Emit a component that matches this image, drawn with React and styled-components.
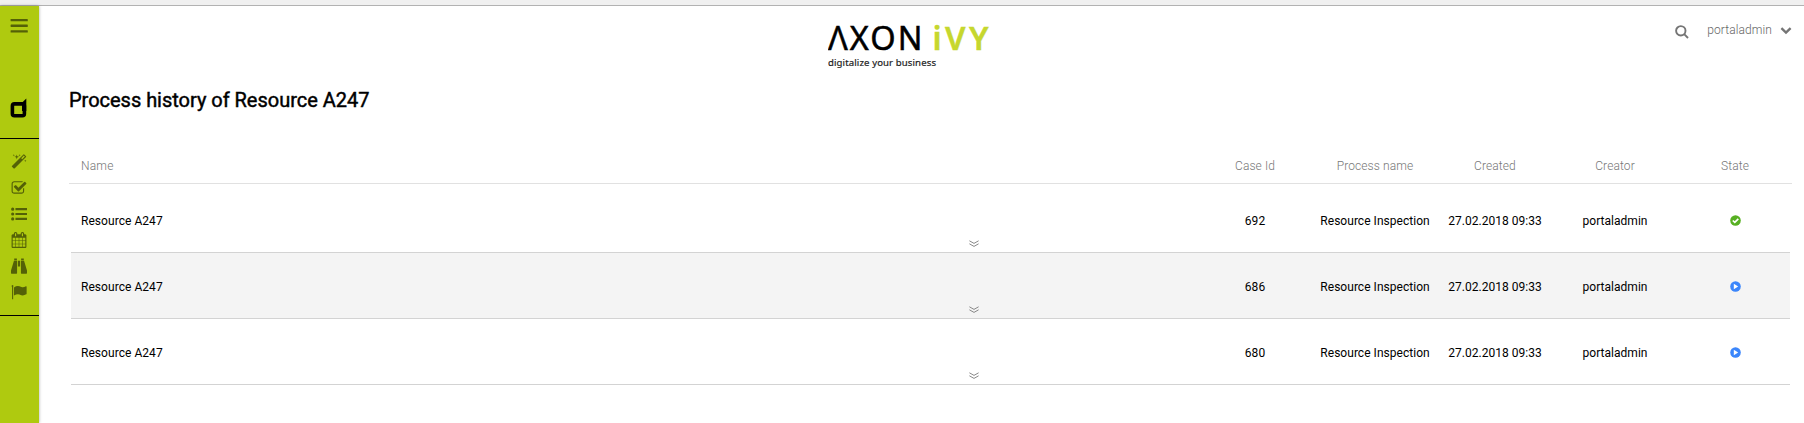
import React from "react";
import styled, { createGlobalStyle } from "styled-components";

const GlobalStyle = createGlobalStyle`
  *, *::before, *::after { box-sizing: border-box; }
  html, body { margin: 0; padding: 0; background: #fff; }
  body { font-family: Roboto, "Liberation Sans", sans-serif; font-size: 12px; color: #000; }
  svg { display: block; }
`;

const Page = styled.div`
  display: flex;
  flex-direction: column;
  width: 100%;
  height: 423px;
  overflow: hidden;
`;

const BrowserEdge = styled.div`
  flex: none;
  height: 6px;
  background: #f0f0f0;
  border-bottom: 1px solid #b2b2b2;
`;

const Body = styled.div`
  display: flex;
  flex: 1;
`;

const Sidebar = styled.nav`
  flex: none;
  width: 39px;
  background: #afca0f;
  box-shadow: 0 0 3px rgba(0, 0, 0, 0.35);
  color: rgba(0, 0, 0, 0.52);
`;

const SidebarTop = styled.div`
  height: 133px;
  padding: 12px 0 0 10px;
  border-bottom: 1px solid #000;
  display: flex;
  flex-direction: column;
  gap: 64px;
`;

const Menu = styled.div`
  height: 177px;
  padding: 10px 0 0 11px;
  border-bottom: 1px solid #000;
`;

const MenuItem = styled.div`
  height: 26px;
  display: flex;
  align-items: center;
`;

const Main = styled.main`
  flex: 1;
  min-width: 0;
`;

const Header = styled.header`
  display: grid;
  grid-template-columns: 1fr 170px 1fr;
  height: 70px;
  padding: 0 12px 0 0;
`;

const LogoCell = styled.div`
  grid-column: 2;
  padding-top: 4px;
  margin-left: -3px;
`;

const UserBar = styled.div`
  display: flex;
  justify-content: flex-end;
  align-items: flex-start;
  color: #757575;
`;

const SearchSlot = styled.div`
  margin: 19px 18px 0 0;
`;

const UserName = styled.span`
  margin-top: 16px;
  line-height: 16px;
  font-size: 12px;
  font-weight: 300;
  letter-spacing: 0.09px;
  color: #666;
`;

const ChevronSlot = styled.div`
  margin: 21px 0 0 8px;
`;

const Title = styled.h1`
  margin: 12px 0 0 30px;
  height: 24px;
  line-height: 24px;
  font-size: 20px;
  font-weight: 400;
  -webkit-text-stroke: 0.45px #000;
  letter-spacing: -0.02px;
  white-space: nowrap;
`;

const Table = styled.section`
  margin: 36px 12px 0 30px;
`;

const columns = "1fr 120px 120px 120px 120px 115px";

const HeadRow = styled.div`
  display: grid;
  grid-template-columns: ${columns};
  align-items: center;
  height: 36px;
  padding: 0 2px 0 2px;
  border-bottom: 1px solid #e1e1e1;
  color: #777;
  font-weight: 300;
  line-height: 37px;
`;

const Rows = styled.div`
  padding: 3px 2px 0;
`;

const Row = styled.div`
  display: grid;
  grid-template-columns: ${columns};
  grid-template-rows: 53px 12px;
  align-items: end;
  line-height: 38px;
  border-bottom: 1px solid #d3d3d3;
  background: ${(p) => (p.$shaded ? "#f4f4f4" : "#fff")};
`;

const NameCell = styled.div`
  padding-left: 10px;
  letter-spacing: ${(p) => (p.$head ? "0.2px" : "0.05px")};
`;

const Cell = styled.div`
  text-align: center;
  white-space: nowrap;
  letter-spacing: ${(p) => (p.$head ? "0.1px" : "0.03px")};
`;

const StateCell = styled(Cell)`
  padding-left: 5px;
`;

const StateSlot = styled.div`
  display: flex;
  justify-content: center;
  align-items: center;
  height: 40px;
  padding-left: 5px;
`;

const Expander = styled.div`
  grid-column: 1 / -1;
  align-self: start;
  display: flex;
  justify-content: center;
  padding: 0 0 0 87px;
`;

const paths = {
  magic:
    "M1254 581l293-293-107-107-293 293zm447-293q0 27-18 45l-1286 1286q-18 18-45 18t-45-18l-198-198q-18-18-18-45t18-45l1286-1286q18-18 45-18t45 18l198 198q18 18 18 45zm-1351-190l98 30-98 30-30 98-30-98-98-30 98-30 30-98zm350 162l196 60-196 60-60 196-60-196-196-60 196-60 60-196zm930 478l98 30-98 30-30 98-30-98-98-30 98-30 30-98zm-640-640l98 30-98 30-30 98-30-98-98-30 98-30 30-98z",
  check:
    "M1472 930v318q0 119-84.5 203.5t-203.5 84.5h-832q-119 0-203.5-84.5t-84.5-203.5v-832q0-119 84.5-203.5t203.5-84.5h832q63 0 117 25 15 7 18 23 3 17-9 29l-49 49q-10 10-23 10-3 0-9-2-23-6-45-6h-832q-66 0-113 47t-47 113v832q0 66 47 113t113 47h832q66 0 113-47t47-113v-254q0-13 9-22l64-64q10-10 23-10 6 0 12 3 20 8 20 29zm231-489l-814 814q-24 24-57 24t-57-24l-430-430q-24-24-24-57t24-57l110-110q24-24 57-24t57 24l263 263 647-647q24-24 57-24t57 24l110 110q24 24 24 57t-24 57z",
  list:
    "M190 170a180 180 0 1 1 0 360a180 180 0 1 1 0-360zM190 716a180 180 0 1 1 0 360a180 180 0 1 1 0-360zM190 1262a180 180 0 1 1 0 360a180 180 0 1 1 0-360zM500 230h1292v240h-1292zM500 776h1292v240h-1292zM500 1322h1292v240h-1292z",
  calendar:
    "M192 1664h288v-288h-288v288zm352 0h320v-288h-320v288zm-352-352h288v-320h-288v320zm352 0h320v-320h-320v320zm-352-384h288v-288h-288v288zm736 736h320v-288h-320v288zm-384-736h320v-288h-320v288zm768 736h288v-288h-288v288zm-384-352h320v-320h-320v320zm-352-864v-288q0-13-9.5-22.5t-22.5-9.5h-64q-13 0-22.5 9.5t-9.5 22.5v288q0 13 9.5 22.5t22.5 9.5h64q13 0 22.5-9.5t9.5-22.5zm736 864h288v-320h-288v320zm-384-384h320v-288h-320v288zm384 0h288v-288h-288v288zm32-480v-288q0-13-9.5-22.5t-22.5-9.5h-64q-13 0-22.5 9.5t-9.5 22.5v288q0 13 9.5 22.5t22.5 9.5h64q13 0 22.5-9.5t9.5-22.5zm384-64v1280q0 52-38 90t-90 38h-1408q-52 0-90-38t-38-90v-1280q0-52 38-90t90-38h128v-96q0-66 47-113t113-47h64q66 0 113 47t47 113v96h384v-96q0-66 47-113t113-47h64q66 0 113 47t47 113v96h128q52 0 90 38t38 90z",
  binoculars:
    "M360 60h300v190h-300zM1132 60h300v190h-300zM330 320h350v1370q0 60-60 60h-560q-60 0-60-60v-300zM1112 320h350l330 1070v300q0 60-60 60h-560q-60 0-60-60zM770 320h252v620h-252z",
  flag:
    "M120 130a110 110 0 0 1 120 180v1400h-120v-1400a110 110 0 0 1 0-180zM330 380q230-150 440-150 150 0 400 110 230 90 500-90 80-30 80 60v780q0 50-50 70-200 120-380 120-140 0-380-110-250-90-610 120z",
};

const Glyph = ({ name }) => (
  <svg width="16" height="16" viewBox="0 0 1792 1792" fill="currentColor">
    <path d={paths[name]} />
  </svg>
);

const Hamburger = () => (
  <svg width="18" height="16" viewBox="0 0 18 16" fill="currentColor">
    <rect x="0.6" y="1" width="17.2" height="2.3" rx="0.4" />
    <rect x="0.6" y="6.6" width="17.2" height="2.3" rx="0.4" />
    <rect x="0.6" y="12.3" width="17.2" height="2.3" rx="0.4" />
  </svg>
);

const BrandMark = () => (
  <svg width="18" height="20" viewBox="0 0 18 20">
    <rect x="2.4" y="5.9" width="12" height="11.8" rx="2" fill="none" stroke="#000" strokeWidth="3.6" />
    <path d="M12 4.8L16.3 0.6V13H12z" fill="#000" />
  </svg>
);

const Logo = () => (
  <svg width="170" height="62" viewBox="0 0 170 62" fontFamily='"Noto Sans", "Open Sans", sans-serif'>
    <text x="0" y="40" fontSize="32.5" stroke="#000" strokeWidth="0.5" textLength="94.5" lengthAdjust="spacing">ΛXON</text>
    <text x="104.5" y="40" fontSize="32.5" fontWeight="600" fill="#c6d72e" stroke="#c6d72e" strokeWidth="0.4" textLength="56" lengthAdjust="spacing">iVY</text>
    <text x="0" y="56" fontSize="9.6" fill="#222" stroke="#222" strokeWidth="0.2" textLength="108" lengthAdjust="spacing">digitalize your business</text>
  </svg>
);

const SearchIcon = () => (
  <svg width="14" height="14" viewBox="0 0 14 14" fill="none" stroke="currentColor" strokeWidth="1.9">
    <circle cx="5.8" cy="5.8" r="4.7" />
    <path d="M9.2 9.2L13 13" />
  </svg>
);

const ChevronDown = () => (
  <svg width="12" height="8" viewBox="0 0 12 8" fill="none" stroke="currentColor" strokeWidth="2.4">
    <path d="M1.4 1.2L6 5.6L10.6 1.2" />
  </svg>
);

const DoubleChevron = () => (
  <svg width="10" height="8" viewBox="0 0 10 8" fill="none" stroke="#7c7c7c" strokeWidth="0.9">
    <path d="M0.4 0.8L5 3.4L9.6 0.8M0.4 3.8L5 6.4L9.6 3.8" />
  </svg>
);

const StateIcon = ({ done }) => (
  <svg width="11" height="11" viewBox="0 0 11 11">
    <circle cx="5.5" cy="5.5" r="5.3" fill={done ? "#57b022" : "#3b86fb"} />
    {done ? (
      <path d="M2.8 5.5L4.8 7.4L8.3 3.9" fill="none" stroke="#fff" strokeWidth="1.7" />
    ) : (
      <path d="M3.8 2.8L8.2 5.5L3.8 8.2z" fill="#fff" />
    )}
  </svg>
);

const cases = [
  { id: "692", done: true },
  { id: "686", done: false },
  { id: "680", done: false },
];

export default function App() {
  return (
    <Page>
      <GlobalStyle />
      <BrowserEdge />
      <Body>
        <Sidebar>
          <SidebarTop>
            <Hamburger />
            <BrandMark />
          </SidebarTop>
          <Menu>
            {["magic", "check", "list", "calendar", "binoculars", "flag"].map((name) => (
              <MenuItem key={name}>
                <Glyph name={name} />
              </MenuItem>
            ))}
          </Menu>
        </Sidebar>
        <Main>
          <Header>
            <LogoCell>
              <Logo />
            </LogoCell>
            <UserBar>
              <SearchSlot>
                <SearchIcon />
              </SearchSlot>
              <UserName>portaladmin</UserName>
              <ChevronSlot>
                <ChevronDown />
              </ChevronSlot>
            </UserBar>
          </Header>
          <Title>Process history of Resource A247</Title>
          <Table>
            <HeadRow>
              <NameCell $head>Name</NameCell>
              <Cell $head>Case Id</Cell>
              <Cell $head>Process name</Cell>
              <Cell $head>Created</Cell>
              <Cell $head>Creator</Cell>
              <StateCell $head>State</StateCell>
            </HeadRow>
            <Rows>
              {cases.map((c, i) => (
                <Row key={c.id} $shaded={i % 2 === 1}>
                  <NameCell>Resource A247</NameCell>
                  <Cell>{c.id}</Cell>
                  <Cell>Resource Inspection</Cell>
                  <Cell>27.02.2018 09:33</Cell>
                  <Cell>portaladmin</Cell>
                  <StateSlot>
                    <StateIcon done={c.done} />
                  </StateSlot>
                  <Expander>
                    <DoubleChevron />
                  </Expander>
                </Row>
              ))}
            </Rows>
          </Table>
        </Main>
      </Body>
    </Page>
  );
}
